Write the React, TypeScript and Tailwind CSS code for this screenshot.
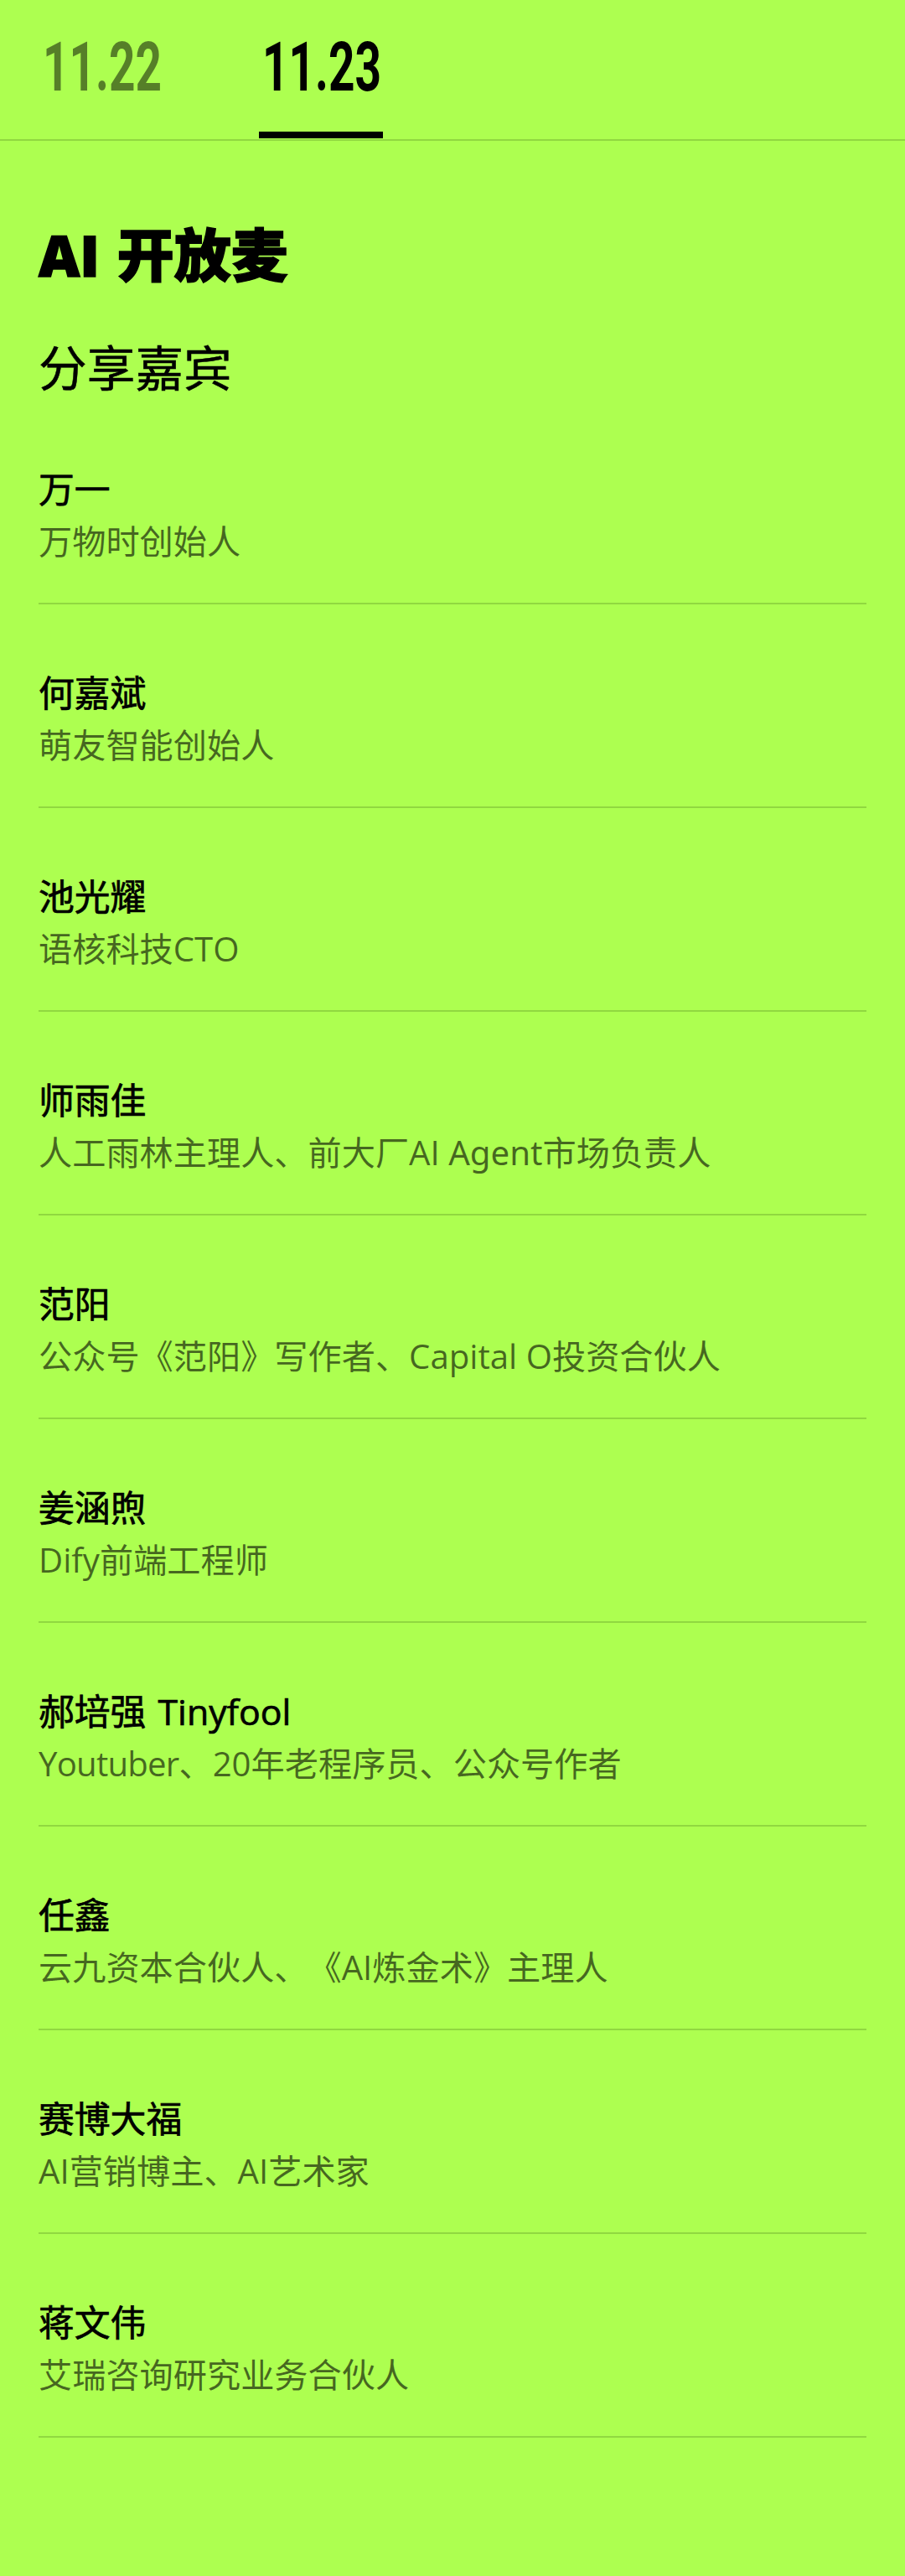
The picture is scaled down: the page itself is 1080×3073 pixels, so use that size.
const speakers = [
  { name: "万一", title: "万物时创始人" },
  { name: "何嘉斌", title: "萌友智能创始人" },
  { name: "池光耀", title: "语核科技CTO" },
  {
    name: "师雨佳",
    title: (
      <>
        人工雨林主理人、前大厂AI <span className="font-['Noto_Sans']">Agent</span>市场负责人
      </>
    ),
  },
  { name: "范阳", title: "公众号《范阳》写作者、Capital O投资合伙人" },
  { name: "姜涵煦", title: "Dify前端工程师" },
  {
    name: "郝培强 Tinyfool",
    title: (
      <>
        <span className="tracking-[-0.8px]">Youtuber</span>、20年老程序员、公众号作者
      </>
    ),
  },
  { name: "任鑫", title: "云九资本合伙人、《AI炼金术》主理人" },
  { name: "赛博大福", title: "AI营销博主、AI艺术家" },
  { name: "蒋文伟", title: "艾瑞咨询研究业务合伙人" },
];

export default function App() {
  return (
    <div className="min-h-[3073px] bg-[#adff50] text-black font-['Open_Sans','Noto_Sans_CJK_SC',sans-serif] [text-spacing-trim:space-all]">
      {/* Date tabs */}
      <nav className="h-[168px] pt-[15px] pb-px pl-[47px] flex gap-[114px] border-b-2 border-[#90d840] font-[Roboto,sans-serif]">
        <button className="w-[148px] pl-[4px] flex items-start text-black/50">
          <span className="origin-left scale-x-[0.67] text-[82px] leading-[130px] font-bold">11.22</span>
        </button>
        <button className="w-[148px] pl-[4px] flex items-start border-b-8 border-black">
          <span className="origin-left scale-x-[0.67] text-[82px] leading-[130px] font-bold">11.23</span>
        </button>
      </nav>

      <main className="px-[46px]">
        <h1 className="pt-[86px] text-[68px] leading-[100px] font-black [word-spacing:3px] [-webkit-text-stroke:1.5px_black]">
          AI 开放麦
        </h1>
        <h2 className="pt-[45px] text-[57.7px] leading-[79px] [-webkit-text-stroke:0.5px_black]">分享嘉宾</h2>
        <ul>
          {speakers.map((s) => (
            <li key={s.name} className="h-[243px] pt-[75px] border-b-2 border-[#90d840]">
              <p className="text-[42.8px] leading-[62px] [word-spacing:3px] [-webkit-text-stroke:0.7px_black]">{s.name}</p>
              <p className="text-[40.2px] leading-[62px] text-black/60">{s.title}</p>
            </li>
          ))}
        </ul>
      </main>
    </div>
  );
}
